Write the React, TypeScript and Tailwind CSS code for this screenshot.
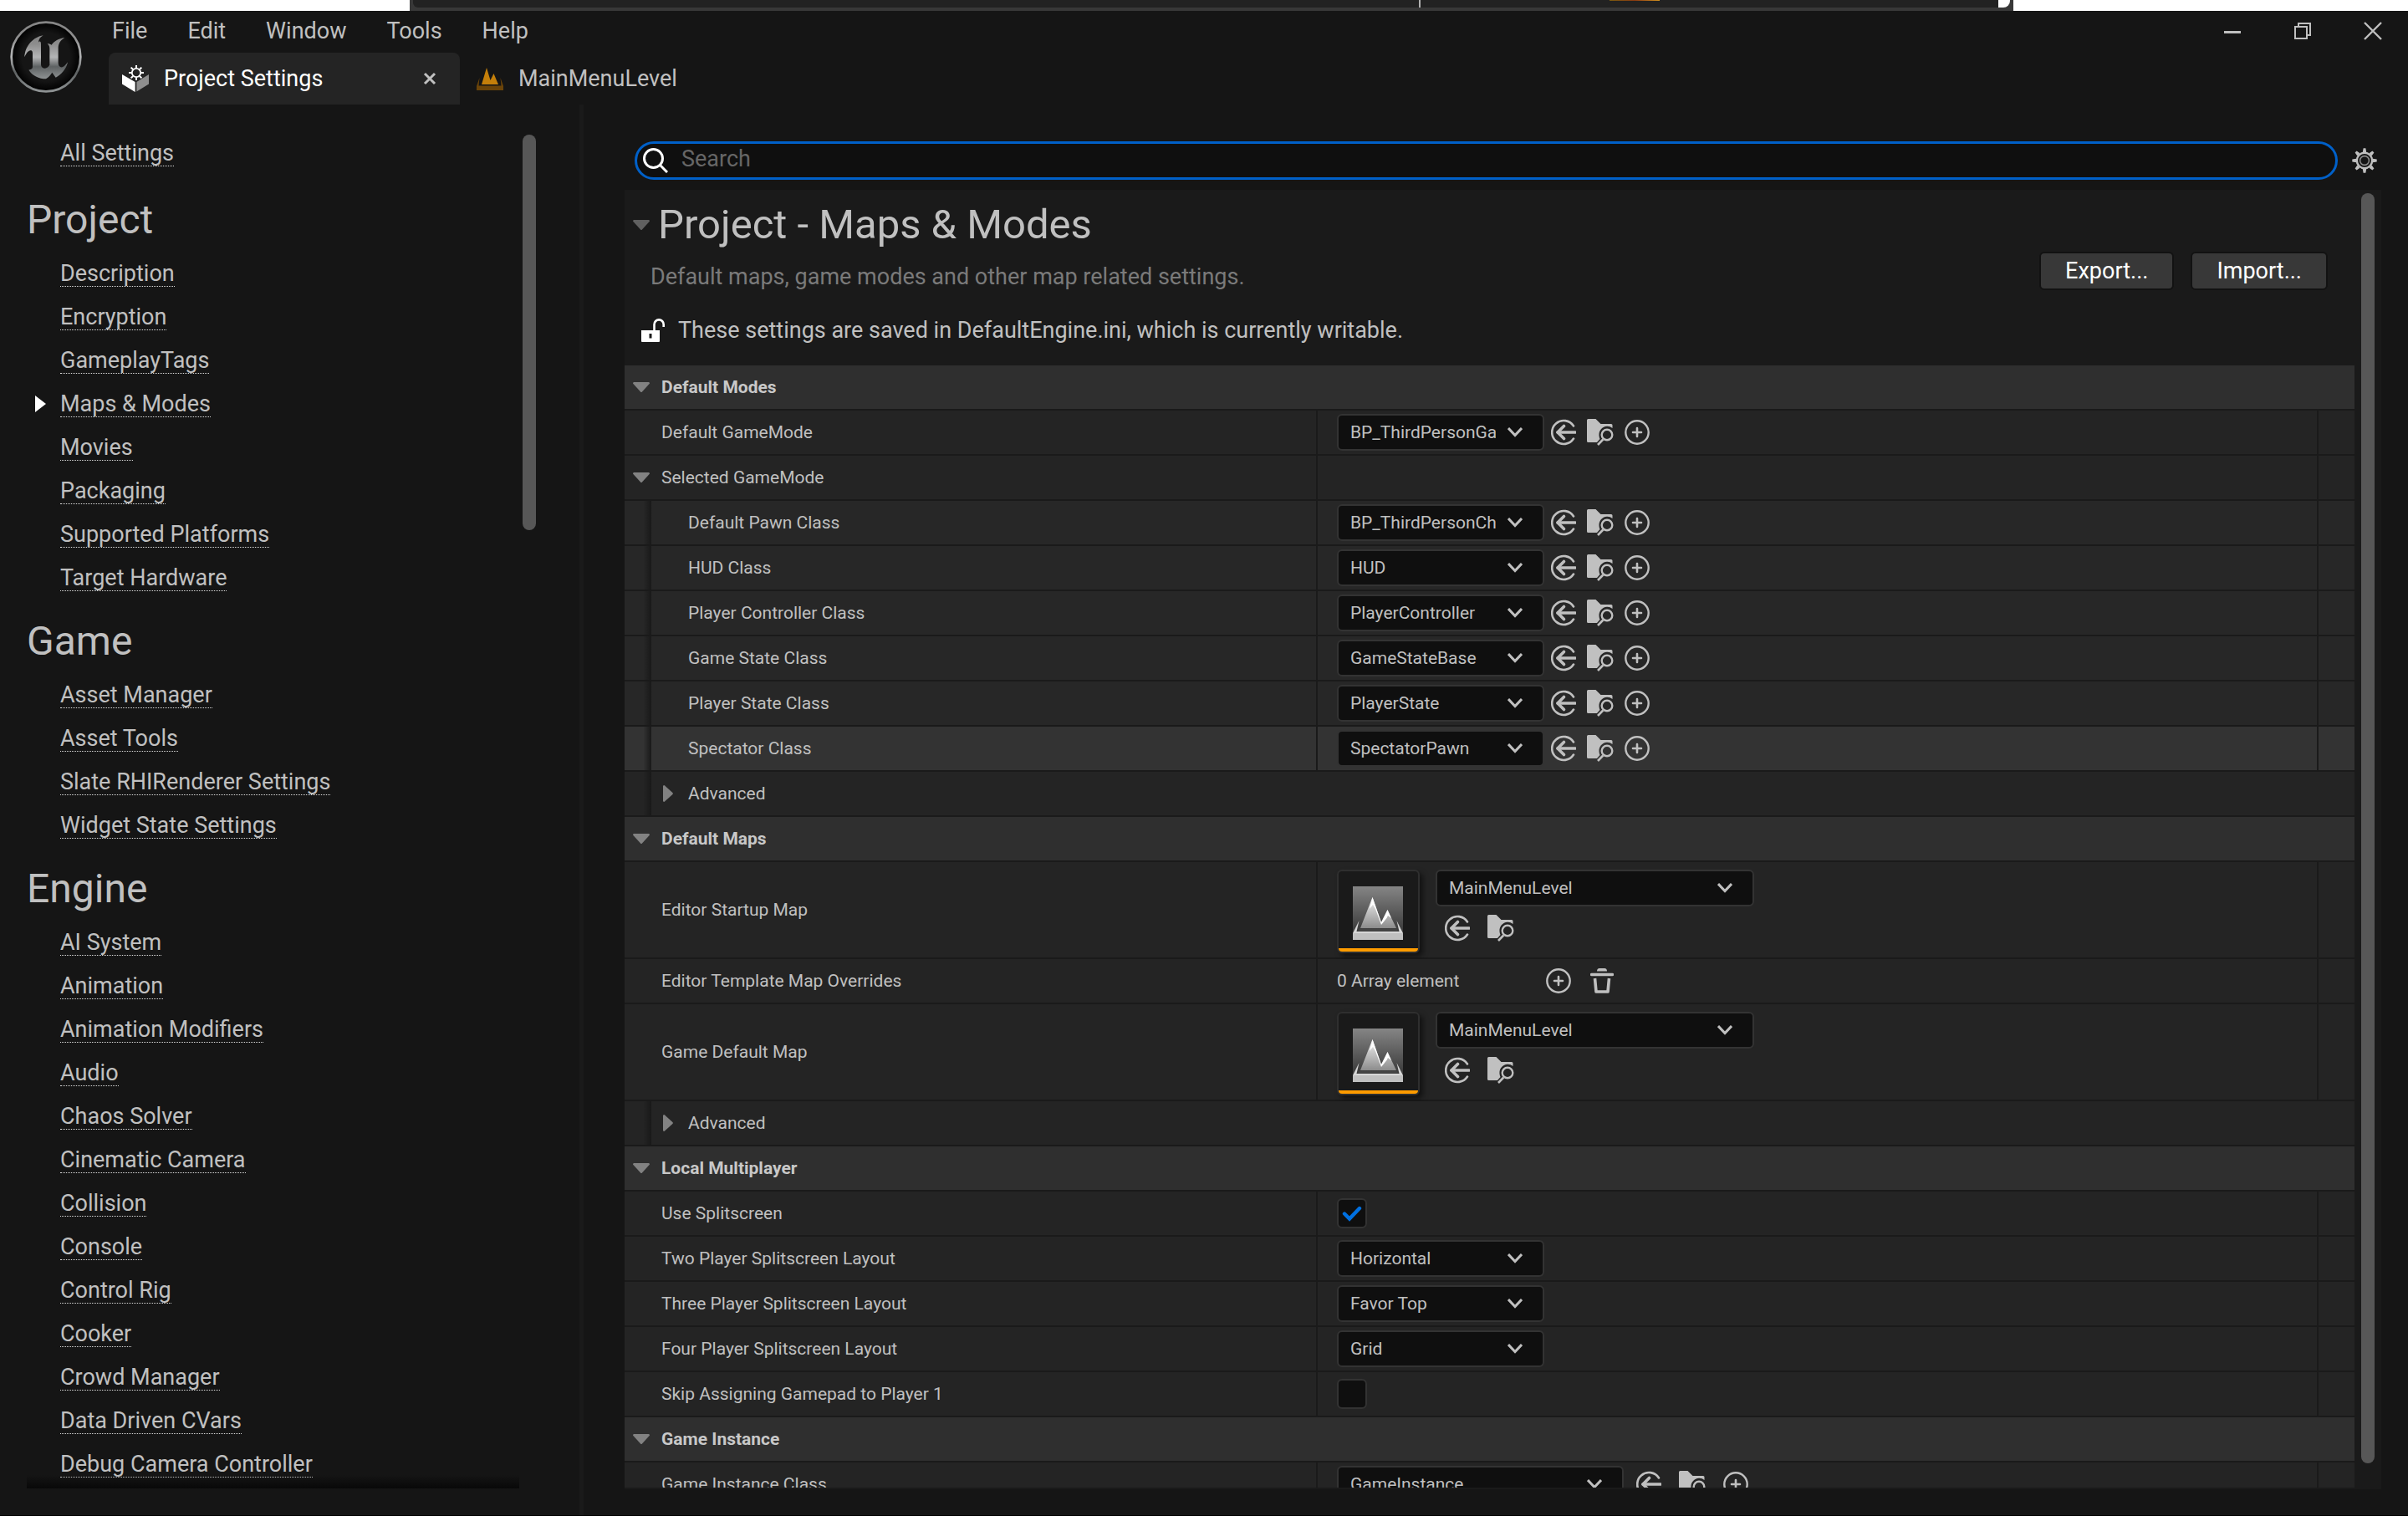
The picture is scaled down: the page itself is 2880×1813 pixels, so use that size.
import React, { ReactNode, useId } from "react";

const MENU = ["File", "Edit", "Window", "Tools", "Help"];

const NAV: { title: string; items: string[] }[] = [
  {
    title: "Project",
    items: ["Description", "Encryption", "GameplayTags", "Maps & Modes", "Movies", "Packaging", "Supported Platforms", "Target Hardware"],
  },
  { title: "Game", items: ["Asset Manager", "Asset Tools", "Slate RHIRenderer Settings", "Widget State Settings"] },
  {
    title: "Engine",
    items: [
      "AI System", "Animation", "Animation Modifiers", "Audio", "Chaos Solver", "Cinematic Camera", "Collision", "Console",
      "Control Rig", "Cooker", "Crowd Manager", "Data Driven CVars", "Debug Camera Controller",
    ],
  },
];

/* ---------- icons ---------- */

function UnrealLogo() {
  return (
    <svg viewBox="36 32 258 258" className="size-[86px]" aria-hidden="true">
      <defs>
        <linearGradient id="logo-metal" x1="0" y1="0" x2="0" y2="1">
          <stop offset="0" stopColor="#858585" />
          <stop offset="0.2" stopColor="#8d8d8d" />
          <stop offset="0.5" stopColor="#b4b5b6" />
          <stop offset="0.72" stopColor="#5d6162" />
          <stop offset="1" stopColor="#8f9394" />
        </linearGradient>
        <radialGradient id="logo-disc">
          <stop offset="0.7" stopColor="#151515" />
          <stop offset="1" stopColor="#000000" />
        </radialGradient>
      </defs>
      <circle cx="165" cy="161" r="124" fill="url(#logo-disc)" stroke="url(#logo-metal)" strokeWidth="8" />
      <path
        fill="url(#logo-metal)"
        d="M155 84C120 90 90 120 88 162C95 145 105 136 112 138C117 140 117 145 117 150V195C117 203 115 206 103 208C115 228 140 240 165 240C175 234 181 227 187 217L200 235C220 225 238 205 243 180C235 192 225 200 218 198C212 196 209 190 209 182V130C209 115 215 103 232 92C210 95 195 105 185 118C180 114 175 114 170 113C177 120 178 125 178 132V190C172 200 160 205 153 200C148 197 147 193 147 186V115C147 105 142 102 138 110C138 98 145 90 155 84Z"
      />
    </svg>
  );
}

const TEETH = [0, 45, 90, 135, 180, 225, 270, 315];

function ProjectSettingsIcon() {
  return (
    <svg viewBox="0 0 32 32" className="size-8" aria-hidden="true">
      <circle cx="17" cy="9" r="5.2" fill="none" stroke="#fff" strokeWidth="1.8" />
      {TEETH.map((a) => (
        <rect key={a} x="16" y="0" width="2" height="3.4" fill="#fff" transform={`rotate(${a} 17 9)`} />
      ))}
      <path d="M0 11L15.600 20V32L0 22.500Z" fill="#fff" />
      <path d="M32 11L17.400 20V31.500L32 22.500Z" fill="#8e8e8e" />
    </svg>
  );
}

function LevelIcon() {
  return (
    <svg viewBox="0 0 32 27" className="h-[27px] w-8" aria-hidden="true">
      <path d="M6 20L12 0L16.500 15L20.500 7L26 20Z" fill="#c47f0a" />
      <path d="M3.500 12L0 22V27H32V22L28.500 12L29.500 21.500H2.500Z" fill="#6b4409" />
    </svg>
  );
}

function SearchIcon() {
  return (
    <svg viewBox="0 0 30 30" className="size-[30px] shrink-0" fill="none" stroke="#fff" strokeWidth="3" aria-hidden="true">
      <circle cx="12.500" cy="12.500" r="11" />
      <path d="M20.500 20.500L29 29" />
    </svg>
  );
}

function GearIcon() {
  return (
    <svg viewBox="0 0 30 30" className="size-[30px]" fill="none" aria-hidden="true">
      {TEETH.map((a) => (
        <path key={a} d="M12.800 5L13.600 0.300H16.400L17.200 5Z" fill="#c0c0c0" transform={`rotate(${a} 15 15)`} />
      ))}
      <circle cx="15" cy="15" r="9.200" stroke="#c0c0c0" strokeWidth="2.400" />
      <circle cx="15" cy="15" r="5.400" stroke="#8a8a8a" strokeWidth="1.600" />
    </svg>
  );
}

function UnlockIcon() {
  return (
    <svg viewBox="0 0 28 28" className="size-7 shrink-0" aria-hidden="true">
      <path d="M15.500 15V7A5.600 5.600 0 0 1 26.700 7V10" fill="none" stroke="#fff" strokeWidth="2.600" />
      <path fillRule="evenodd" d="M0 14H22V27Q22 28 21 28H1Q0 28 0 27ZM9.500 18V23.500H12.500V18Z" fill="#fff" />
    </svg>
  );
}

function UseIcon() {
  return (
    <svg viewBox="0 0 30 32" className="h-8 w-[30px]" fill="none" stroke="#c0c0c0" aria-hidden="true">
      <path d="M27 8.500A14 14 0 1 0 27 23.500" strokeWidth="2.600" strokeLinecap="round" />
      <path d="M29 16H8" strokeWidth="3.600" strokeLinecap="round" />
      <path d="M15.500 8.500L8 16L15.500 23.500" strokeWidth="3.600" strokeLinecap="round" strokeLinejoin="round" />
    </svg>
  );
}

function BrowseIcon() {
  return (
    <svg viewBox="0 0 32 32" className="size-8" aria-hidden="true">
      <path
        fill="#c0c0c0"
        d="M1.500 0H10.500L16.500 6H29Q30.500 6 30.500 7.500V11Q27.500 8.600 24 8.800C18 9.200 14 14 14.500 20Q14.700 22.500 15.500 24L12 28H1.500Q0 28 0 26.500V1.500Q0 0 1.500 0Z"
      />
      <circle cx="24" cy="19" r="6.300" fill="none" stroke="#c0c0c0" strokeWidth="2.400" />
      <path d="M19.300 24.500L13 31" stroke="#c0c0c0" strokeWidth="2.600" />
    </svg>
  );
}

function AddIcon() {
  return (
    <svg viewBox="0 0 30 30" className="size-[30px]" fill="none" stroke="#c0c0c0" aria-hidden="true">
      <circle cx="15" cy="15" r="13.700" strokeWidth="2.400" />
      <path d="M15 10V20M10 15H20" strokeWidth="2.600" strokeLinecap="round" />
    </svg>
  );
}

function TrashIcon() {
  return (
    <svg viewBox="0 0 28 30" className="h-[30px] w-7" fill="none" stroke="#c0c0c0" aria-hidden="true">
      <path d="M8 3.500Q8 0 11 0H17Q20 0 20 3.500Z" fill="#c0c0c0" stroke="none" />
      <path d="M1.500 7.500H26.500" strokeWidth="3.400" strokeLinecap="round" />
      <path d="M5.500 12L7 28H21L22.500 12" strokeWidth="3.600" strokeLinejoin="round" />
    </svg>
  );
}

function Chevron() {
  return (
    <svg viewBox="0 0 18 12" className="h-3 w-[18px]" fill="none" stroke="#c0c0c0" strokeWidth="3" aria-hidden="true">
      <path d="M1 1L9 9.500L17 1" />
    </svg>
  );
}

function DownTriangle({ dim = false }: { dim?: boolean }) {
  return (
    <svg viewBox="0 0 20 12" className="h-3 w-5" aria-hidden="true">
      <path d="M1 0H19Q20.500 0.800 19.600 2L11 11.400Q10 12.400 9 11.400L0.400 2Q-0.500 0.800 1 0Z" fill={dim ? "#606060" : "#828282"} />
    </svg>
  );
}

function RightTriangle() {
  return (
    <svg viewBox="0 0 12 20" className="h-5 w-3" aria-hidden="true">
      <path d="M0 1V19Q0.800 20.500 2 19.600L11.400 11Q12.400 10 11.400 9L2 0.400Q0.800 -0.500 0 1Z" fill="#828282" />
    </svg>
  );
}

function MapThumbnail() {
  return (
    <div className="flex h-[100px] w-[99px] flex-col items-center justify-between overflow-hidden rounded-md border-2 border-[#2f2f2f] bg-[#1a1a1a] pt-[18px] shadow-[4px_4px_6px_rgba(0,0,0,0.5)]">
      <svg viewBox="0 0 60 64" className="h-16 w-[60px]" aria-hidden="true">
        <defs>
          <linearGradient id="map-sky" x1="0" y1="0" x2="0" y2="1">
            <stop offset="0" stopColor="#858585" />
            <stop offset="1" stopColor="#2c2c2c" />
          </linearGradient>
          <linearGradient id="map-peak" x1="0" y1="0" x2="0" y2="1">
            <stop offset="0" stopColor="#f2f2f2" />
            <stop offset="1" stopColor="#8c8c8c" />
          </linearGradient>
        </defs>
        <rect width="60" height="64" fill="url(#map-sky)" />
        <path d="M9 50L23.500 13L34 43L41.500 28L52 50Z" fill="url(#map-peak)" />
        <path d="M23.500 13L34 43L41.500 28L46 38L42 35L40.500 38L34 46L27 27L24 22L20 27Z" fill="#fff" />
        <path d="M0 56H60V64H0Z" fill="#c0c0c0" />
        <path d="M0 56L7.500 41L4.500 54H55.500L52.500 41L60 56Z" fill="#d6d6d6" />
        <path d="M7.500 51H52.500L54 54H6Z" fill="#444" />
      </svg>
      <div className="h-1 w-full bg-[#ff9c00]" />
    </div>
  );
}

/* ---------- controls ---------- */

function IconButton({ label, children, wide = false }: { label: string; children: ReactNode; wide?: boolean }) {
  return (
    <button type="button" aria-label={label} className={`flex h-8 items-center justify-center ${wide ? "w-[52px]" : "w-11"}`}>
      {children}
    </button>
  );
}

function Dropdown({ id, value, width = "w-[248px]" }: { id: string; value: string; width?: string }) {
  return (
    <div className={`relative h-11 ${width}`}>
      <select
        id={id}
        defaultValue={value}
        className="size-full appearance-none rounded-md border-2 border-[#333333] bg-[#0f0f0f] pt-[2px] pr-14 pl-[14px] text-[21px] text-[#c0c0c0] outline-none"
      >
        <option>{value}</option>
      </select>
      <span className="pointer-events-none absolute inset-y-0 right-[26px] flex items-center">
        <Chevron />
      </span>
    </div>
  );
}

function ClassPicker({ id, value, large = false }: { id: string; value: string; large?: boolean }) {
  return (
    <div className="flex items-center">
      <Dropdown id={id} value={value} width={large ? "w-[343px]" : "w-[248px]"} />
      <div className={`flex ${large ? "ml-1" : "ml-px"}`}>
        <IconButton label="Use selected asset" wide={large}><UseIcon /></IconButton>
        <IconButton label="Browse to asset" wide={large}><BrowseIcon /></IconButton>
        <IconButton label="Create new asset" wide={large}><AddIcon /></IconButton>
      </div>
    </div>
  );
}

function MapPicker({ id, value }: { id: string; value: string }) {
  return (
    <div className="flex gap-[19px] pt-1">
      <MapThumbnail />
      <div className="flex flex-col gap-[10px]">
        <Dropdown id={id} value={value} width="w-[381px]" />
        <div className="flex">
          <IconButton label="Use selected map" wide><UseIcon /></IconButton>
          <IconButton label="Browse to map" wide><BrowseIcon /></IconButton>
        </div>
      </div>
    </div>
  );
}

function CheckBox({ id, checked = false }: { id: string; checked?: boolean }) {
  return (
    <div className="relative size-9">
      <input id={id} type="checkbox" defaultChecked={checked} className="peer block size-full appearance-none rounded-md border-2 border-[#333333] bg-[#0f0f0f]" />
      <svg viewBox="0 0 24 20" className="pointer-events-none absolute top-2 left-[6px] hidden h-5 w-6 peer-checked:block" fill="none" aria-hidden="true">
        <path d="M3 10.500L9 16.500L21 4" stroke="#0070e0" strokeWidth="4.400" strokeLinecap="round" />
      </svg>
    </div>
  );
}

/* ---------- rows ---------- */

function SectionHeader({ title }: { title: string }) {
  return (
    <h3>
      <button type="button" aria-expanded="true" className="flex h-[52px] w-full items-center gap-[14px] bg-[#2f2f2f] pl-[10px] text-[21px] font-bold text-[#c8c8c8]">
        <DownTriangle />
        <span className="pt-[2px]">{title}</span>
      </button>
    </h3>
  );
}

function IndentStrip() {
  return <div className="w-8 shrink-0 bg-linear-to-r from-transparent from-70% to-[#191919]" />;
}

function Row({
  label,
  nested = false,
  expandable = false,
  hovered = false,
  tall = false,
  control,
}: {
  label: string;
  nested?: boolean;
  expandable?: boolean;
  hovered?: boolean;
  tall?: boolean;
  control?: (id: string) => ReactNode;
}) {
  const id = useId();
  const bg = hovered ? "bg-[#333333]" : nested ? "bg-[#272727]" : "bg-[#242424]";
  return (
    <div className={`grid shrink-0 grid-cols-[409fr_591fr_43px] gap-[2px] ${tall ? "h-[114px]" : "h-[52px]"}`}>
      <div className={`flex items-stretch ${bg}`}>
        {nested && <IndentStrip />}
        <div className="flex items-center gap-[14px] pl-[10px]">
          <span className="flex w-5 justify-center">{expandable && <DownTriangle />}</span>
          <label htmlFor={id} className="pt-[2px]">{label}</label>
        </div>
      </div>
      <div className={`flex items-center pl-[23px] ${bg}`}>{control?.(id)}</div>
      <div className={bg} />
    </div>
  );
}

function AdvancedRow() {
  return (
    <div className="flex h-[52px] shrink-0 bg-[#242424]">
      <IndentStrip />
      <button type="button" aria-expanded="false" className="flex items-center gap-[14px] pl-[10px]">
        <span className="flex w-5 justify-center"><RightTriangle /></span>
        <span className="pt-[2px]">Advanced</span>
      </button>
    </div>
  );
}

/* ---------- page parts ---------- */

function BackgroundWindow() {
  return (
    <div className="flex h-[13px] shrink-0 bg-white">
      <div className="w-[17%]" />
      <div className="flex h-full w-[66.6%] bg-[#383838] px-1 pb-1">
        <div className="h-full w-[63%] rounded-bl-md bg-[#222222]" />
        <div className="h-full w-[2px] bg-[#b0b0b0]" />
        <div className="h-full flex-1 bg-[#222222] pl-[226px]">
          <div className="h-px w-[60px] bg-linear-to-r from-[#7a5a10] via-[#8a3a10] to-[#d09020]" />
        </div>
        <div className="h-full w-[14px] rounded-br-lg bg-white" />
      </div>
    </div>
  );
}

function TitleBar() {
  return (
    <header className="flex h-28 shrink-0">
      <div className="w-[130px] pt-3 pl-3">
        <UnrealLogo />
      </div>
      <div className="flex flex-1 flex-col">
        <div className="flex h-[50px] items-start justify-between">
          <nav className="flex gap-12 pt-2 pl-1 leading-8">
            {MENU.map((m) => (
              <button key={m} type="button">{m}</button>
            ))}
          </nav>
          <div className="flex pt-2">
            <button type="button" aria-label="Minimize" className="flex h-8 w-[84px] items-center justify-center">
              <svg viewBox="0 0 20 20" className="size-5"><path d="M0 11.500H20" stroke="#c0c0c0" strokeWidth="3" /></svg>
            </button>
            <button type="button" aria-label="Restore" className="flex h-8 w-[84px] items-center justify-center">
              <svg viewBox="0 0 20 20" className="size-5" fill="none" stroke="#c0c0c0" strokeWidth="2">
                <path d="M1 5H15V19H1ZM5 5V1H19V15H15" />
              </svg>
            </button>
            <button type="button" aria-label="Close" className="flex h-8 w-[84px] items-center justify-center">
              <svg viewBox="0 0 22 22" className="size-[22px]" stroke="#c0c0c0" strokeWidth="2.400"><path d="M1 1L21 21M21 1L1 21" /></svg>
            </button>
          </div>
        </div>
        <div className="flex flex-1">
          <div className="flex w-[420px] items-center rounded-t-lg bg-[#242424] pr-7 pl-4 text-white">
            <ProjectSettingsIcon />
            <button type="button" className="ml-[18px] flex-1 text-left">Project Settings</button>
            <button type="button" aria-label="Close tab">
              <svg viewBox="0 0 16 16" className="size-4" stroke="#c0c0c0" strokeWidth="3"><path d="M2 2L14 14M14 2L2 14" /></svg>
            </button>
          </div>
          <button type="button" className="ml-5 flex items-center gap-[18px]">
            <LevelIcon />
            MainMenuLevel
          </button>
        </div>
      </div>
    </header>
  );
}

function NavLink({ label, current = false }: { label: string; current?: boolean }) {
  return (
    <li className="flex h-[52px] items-center">
      <span className="flex w-10 justify-center pr-2">
        {current && (
          <svg viewBox="0 0 14 20" className="h-5 w-[14px]" aria-hidden="true"><path d="M1 0L14 10L1 20Z" fill="#fff" /></svg>
        )}
      </span>
      <a href="#" aria-current={current ? "page" : undefined} className="border-b border-dotted border-[#d8d8d8] pt-[2px] leading-[29px]">
        {label}
      </a>
    </li>
  );
}

function Sidebar() {
  return (
    <aside className="flex w-[693px] shrink-0 justify-between pr-[52px] pb-8 pl-8">
      <nav className="relative min-w-0 flex-1 overflow-hidden pt-8">
        <ul className="mb-1"><NavLink label="All Settings" /></ul>
        {NAV.map((g) => (
          <section key={g.title}>
            <h2 className="flex h-[88px] items-center pt-[11px] text-[48px]">{g.title}</h2>
            <ul>
              {g.items.map((i) => (
                <NavLink key={i} label={i} current={i === "Maps & Modes"} />
              ))}
            </ul>
          </section>
        ))}
        <div className="absolute inset-x-0 bottom-0 h-4 bg-linear-to-b from-transparent to-[#080808]" />
      </nav>
      <div className="mt-9 ml-1 h-[473px] w-4 rounded-full bg-[#575757]" />
    </aside>
  );
}

function PanelHeading() {
  return (
    <div className="flex h-[208px] shrink-0 justify-between">
      <div className="pl-[10px]">
        <h1 className="flex items-center gap-[10px] pt-[14px] text-[49px] leading-14">
          <DownTriangle dim />
          Project - Maps &amp; Modes
        </h1>
        <p className="pt-[18px] pl-[21px] leading-8 text-[#7a7a7a]">Default maps, game modes and other map related settings.</p>
        <div className="flex items-center gap-4 pt-8 pl-[10px] leading-8">
          <UnlockIcon />
          These settings are saved in DefaultEngine.ini, which is currently writable.
        </div>
      </div>
      <div className="flex gap-5 pt-[74px] pr-8">
        <button type="button" className="h-[46px] rounded-md border-2 border-[#121212] bg-[#383838] px-[29px] text-white">Export...</button>
        <button type="button" className="h-[46px] rounded-md border-2 border-[#121212] bg-[#383838] px-[29px] text-white">Import...</button>
      </div>
    </div>
  );
}

export default function App() {
  return (
    <div className="flex h-screen flex-col overflow-hidden bg-[#151515] font-[Roboto,sans-serif] text-[27px] text-[#c0c0c0]">
      <BackgroundWindow />
      <TitleBar />
      <div className="flex min-h-0 flex-1 border-b border-black">
        <Sidebar />
        <div className="w-[5px] shrink-0 bg-[#1a1a1a]" />
        <main className="flex min-w-0 flex-1 flex-col pt-11 pr-8 pb-[31px] pl-[49px]">
          <div className="mb-3 flex shrink-0 items-center gap-[17px] pr-[5px] pl-3">
            <label className="flex h-[46px] flex-1 items-center gap-4 rounded-full border-[3px] border-[#0060c8] bg-[#0f0f0f] pl-[7px]">
              <SearchIcon />
              <input type="text" aria-label="Search" placeholder="Search" className="h-full min-w-0 flex-1 bg-transparent pb-1 outline-none placeholder:text-[#666666]" />
            </label>
            <button type="button" aria-label="Settings"><GearIcon /></button>
          </div>

          <section className="flex min-h-0 flex-1 justify-between bg-[#1a1a1a] pr-2">
            <div className="mb-[2px] flex min-w-0 flex-1 flex-col gap-[2px] overflow-hidden text-[21px]">
              <div className="text-[27px]"><PanelHeading /></div>
              <SectionHeader title="Default Modes" />
              <Row label="Default GameMode" control={(id) => <ClassPicker id={id} value="BP_ThirdPersonGameMode" />} />
              <Row label="Selected GameMode" expandable />
              <Row nested label="Default Pawn Class" control={(id) => <ClassPicker id={id} value="BP_ThirdPersonCharacter" />} />
              <Row nested label="HUD Class" control={(id) => <ClassPicker id={id} value="HUD" />} />
              <Row nested label="Player Controller Class" control={(id) => <ClassPicker id={id} value="PlayerController" />} />
              <Row nested label="Game State Class" control={(id) => <ClassPicker id={id} value="GameStateBase" />} />
              <Row nested label="Player State Class" control={(id) => <ClassPicker id={id} value="PlayerState" />} />
              <Row nested hovered label="Spectator Class" control={(id) => <ClassPicker id={id} value="SpectatorPawn" />} />
              <AdvancedRow />
              <SectionHeader title="Default Maps" />
              <Row tall label="Editor Startup Map" control={(id) => <MapPicker id={id} value="MainMenuLevel" />} />
              <Row
                label="Editor Template Map Overrides"
                control={(id) => (
                  <div className="flex items-center">
                    <output id={id} className="w-[239px] pt-[2px]">0 Array element</output>
                    <IconButton label="Add element" wide><AddIcon /></IconButton>
                    <IconButton label="Remove all elements" wide><TrashIcon /></IconButton>
                  </div>
                )}
              />
              <Row tall label="Game Default Map" control={(id) => <MapPicker id={id} value="MainMenuLevel" />} />
              <AdvancedRow />
              <SectionHeader title="Local Multiplayer" />
              <Row label="Use Splitscreen" control={(id) => <CheckBox id={id} checked />} />
              <Row label="Two Player Splitscreen Layout" control={(id) => <Dropdown id={id} value="Horizontal" />} />
              <Row label="Three Player Splitscreen Layout" control={(id) => <Dropdown id={id} value="Favor Top" />} />
              <Row label="Four Player Splitscreen Layout" control={(id) => <Dropdown id={id} value="Grid" />} />
              <Row label="Skip Assigning Gamepad to Player 1" control={(id) => <CheckBox id={id} />} />
              <SectionHeader title="Game Instance" />
              <Row label="Game Instance Class" control={(id) => <ClassPicker large id={id} value="GameInstance" />} />
            </div>
            <div className="mt-1 mb-[31px] ml-2 w-4 rounded-full bg-[#575757]" />
          </section>
        </main>
      </div>
    </div>
  );
}
